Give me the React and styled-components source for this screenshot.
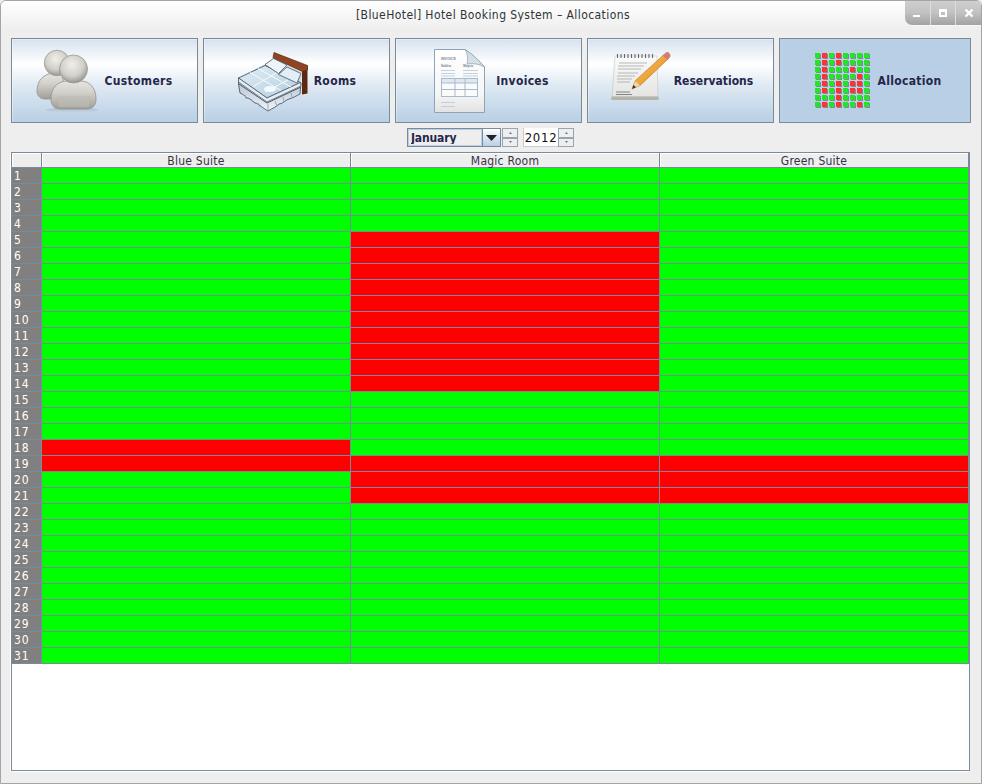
import React from "react";
import styled, { createGlobalStyle } from "styled-components";

const Global = createGlobalStyle`
  html, body { margin: 0; padding: 0; background: #eeeeee; }
  #root { width: 982px; height: 784px; }
`;

const LINE = "#7a8a99";
const UI_FONT = `"DejaVu Sans Condensed", "DejaVu Sans", sans-serif`;

const Window = styled.div`
  position: relative;
  box-sizing: border-box;
  width: 982px;
  height: 784px;
  display: flex;
  flex-direction: column;
  overflow: hidden;
  background: #eeeeee;
  border: 1px solid #a4a4a4;
  border-radius: 6px 6px 0 0;
  font-family: ${UI_FONT};
  font-stretch: condensed;
`;

const TitleBar = styled.div`
  flex: none;
  height: 29px;
  display: flex;
  align-items: center;
  justify-content: center;
  padding: 0 0 2px 4px;
  box-sizing: border-box;
  background: linear-gradient(#ffffff, #fafafa 30%, #eeeeee);
  color: #2e3436;
  font-size: 12px;
  letter-spacing: 0.42px;
`;

const WindowControls = styled.div`
  position: absolute;
  top: -1px;
  right: 0;
  width: 76px;
  height: 25px;
  display: flex;
  background: linear-gradient(#d0d0d0, #c2c2c2 50%, #a2a2a2);
  border-bottom-left-radius: 7px;
  box-shadow: 0 1px 0 #f8f8f8;
`;

const ControlCell = styled.div`
  flex: 1;
  display: flex;
  align-items: center;
  justify-content: center;
  border-left: ${(p) => (p.$sep ? "1px solid #dedede" : "none")};
`;

const Toolbar = styled.div`
  flex: none;
  display: flex;
  gap: 5px;
  padding: 8px 10px 0;
`;

const NavButton = styled.div`
  box-sizing: border-box;
  width: ${(p) => (p.$wide ? 192 : 187)}px;
  height: 85px;
  display: flex;
  align-items: center;
  justify-content: center;
  gap: ${(p) => p.$gap}px;
  border: 1px solid ${LINE};
  background: ${(p) =>
    p.$active
      ? "#b8cfe5"
      : "linear-gradient(#d6e2ef, #ffffff 30%, #dde8f2 58%, #b8cfe5)"};
  box-shadow: ${(p) => (p.$active ? "none" : "inset 1px 1px 0 rgba(255,255,255,.35)")};
`;

const NavLabel = styled.span`
  font-size: 12px;
  font-weight: 700;
  letter-spacing: ${(p) => p.$track}px;
  color: #26264a;
  white-space: nowrap;
`;

const DateRow = styled.div`
  flex: none;
  height: 29px;
  box-sizing: border-box;
  padding: 5px 0 0 406px;
  display: flex;
  align-items: flex-start;
`;

const MonthCombo = styled.div`
  box-sizing: border-box;
  width: 94px;
  height: 19px;
  display: flex;
  border: 1px solid ${LINE};
`;

const MonthValue = styled.div`
  box-sizing: border-box;
  flex: 1;
  height: 17px;
  padding-left: 2px;
  border: 1px solid #b8cfe5;
  background: #eeeeee;
`;

const MonthText = styled.div`
  height: 14px;
  overflow: hidden;
  color: #26264a;
  font-size: 12px;
  font-weight: 700;
  line-height: 17px;
  letter-spacing: -0.15px;
`;

const ArrowButton = styled.div`
  box-sizing: border-box;
  flex: none;
  width: 18px;
  display: flex;
  align-items: center;
  justify-content: center;
  border-left: 1px solid ${LINE};
  background: linear-gradient(#ffffff, #dde8f2 45%, #b8cfe5);
`;

const Spinner = styled.div`
  box-sizing: border-box;
  flex: none;
  width: 16px;
  height: 19px;
  display: flex;
  flex-direction: column;
  margin-left: ${(p) => p.$ml || 0}px;
  border: 1px solid #98a4b0;
`;

const SpinPart = styled.div`
  flex: 1;
  display: flex;
  align-items: center;
  justify-content: center;
  background: #eeeeee;
  border-top: ${(p) => (p.$lower ? "2px solid #98a4b0" : "none")};
`;

const YearField = styled.div`
  box-sizing: border-box;
  flex: none;
  width: 35px;
  height: 19px;
  margin-left: 5px;
  background: #ffffff;
  border-left: 1px solid #cccccc;
  border-bottom: 1px solid #cccccc;
  color: #111111;
  font-size: 13px;
  letter-spacing: 0.7px;
  line-height: 19px;
  text-align: center;
`;

const TableFrame = styled.div`
  flex: 1;
  margin: 0 11px 12px 10px;
  border: 1px solid ${LINE};
  box-shadow: -1px 1px 0 #ffffff;
  background: #ffffff;
  display: flex;
  flex-direction: column;
`;

const GridRow = styled.div`
  display: grid;
  grid-template-columns: 30px repeat(3, 309px);
  grid-template-rows: ${(p) => (p.$header ? 15 : 16)}px;
  height: ${(p) => (p.$header ? 15 : 16)}px;
  box-sizing: border-box;
  flex: none;
`;

const HeadCell = styled.div`
  box-sizing: border-box;
  background: #eeeeee;
  border-right: 1px solid ${LINE};
  border-bottom: 1px solid ${LINE};
  box-shadow: inset 1px 1px 0 #ffffff;
  color: #333344;
  font-size: 12px;
  letter-spacing: 0.25px;
  line-height: 16px;
  text-align: center;
`;

const DayCell = styled.div`
  box-sizing: border-box;
  padding-left: 2px;
  background: #808080;
  border-right: 1px solid ${LINE};
  border-bottom: 1px solid ${LINE};
  color: #ffffff;
  font-size: 12px;
  letter-spacing: 0.8px;
  line-height: 16px;
`;

const SlotCell = styled.div`
  box-sizing: border-box;
  background: ${(p) => (p.$busy ? "#ff0000" : "#00ff00")};
  border-right: 1px solid ${LINE};
  border-bottom: 1px solid ${LINE};
`;

const rooms = [
  { name: "Blue Suite", busy: [18, 19] },
  { name: "Magic Room", busy: [5, 6, 7, 8, 9, 10, 11, 12, 13, 14, 19, 20, 21] },
  { name: "Green Suite", busy: [19, 20, 21] },
];
const days = Array.from({ length: 31 }, (_, i) => i + 1);

const CustomersIcon = () => (
  <svg width="64" height="64" viewBox="0 0 64 64">
    <defs>
      <radialGradient id="hd" cx="0.45" cy="0.35" r="0.68">
        <stop offset="0" stopColor="#f0efea" />
        <stop offset="0.6" stopColor="#d0cfc8" />
        <stop offset="1" stopColor="#8f8e87" />
      </radialGradient>
      <linearGradient id="bd" x1="0" y1="0" x2="0" y2="1">
        <stop offset="0" stopColor="#e6e5df" />
        <stop offset="0.4" stopColor="#d2d1ca" />
        <stop offset="1" stopColor="#a09f97" />
      </linearGradient>
      <linearGradient id="sh" x1="0" y1="0" x2="0" y2="1">
        <stop offset="0" stopColor="#8a9099" stopOpacity="0.45" />
        <stop offset="1" stopColor="#8a9099" stopOpacity="0" />
      </linearGradient>
    </defs>
    <ellipse cx="36" cy="61" rx="26" ry="2.5" fill="url(#sh)" />
    <path d="M1 42C1 31 8 25 17 24L26 24L30 50L8 50C3 49 1 46 1 42Z" fill="url(#bd)" stroke="#93928b" strokeWidth=".8" />
    <circle cx="21" cy="14" r="12.7" fill="url(#hd)" stroke="#9a9992" strokeWidth=".8" />
    <path d="M15 50C15 38 22 33 30 32L46 32C54 33 60 39 60 50C60 57 56 60 50 60L25 60C18 60 15 56 15 50Z" fill="url(#bd)" stroke="#93928b" strokeWidth=".8" />
    <path d="M21 47L54 47L53 58L23 58Z" fill="#bdbcb5" opacity=".6" />
    <circle cx="37.5" cy="20" r="14" fill="url(#hd)" stroke="#9a9992" strokeWidth=".8" />
  </svg>
);

const RoomsIcon = () => (
  <svg width="72" height="64" viewBox="0 0 72 64">
    <defs>
      <linearGradient id="quilt" x1="0" y1="0" x2="1" y2="1">
        <stop offset="0" stopColor="#e0edf5" />
        <stop offset="1" stopColor="#b4cddf" />
      </linearGradient>
      <linearGradient id="skirt" x1="0" y1="0" x2="0" y2="1">
        <stop offset="0" stopColor="#aebccd" />
        <stop offset="1" stopColor="#f0f4f9" />
      </linearGradient>
    </defs>
    <path d="M65 17L70.500 16.500L70.500 44.500L65 45.500Z" fill="#5e2810" />
    <path d="M37 3.500L70.500 16.500L70.500 21L65 22.500L36 9Z" fill="#8f4424" stroke="#5e2810" strokeWidth=".7" />
    <path d="M28 15L36 9.500L65 23L64 34L30 49L1.500 29Z" fill="#c9dceb" />
    <path d="M1.500 29L1.500 35L3 44C6 45 8 47 10 49C13 49 15 52 18 54C21 54 24 58 31 62C36 59 39 58 42 55C46 55 48 51 52 50C56 49 59 47 63 45L64 34L30 49Z" fill="url(#skirt)" stroke="#4c5866" strokeWidth=".9" />
    <path d="M2 35L30 54L64 38" fill="none" stroke="#4c5866" strokeWidth="1" />
    <path d="M8 46L9 50M14 50L16 53M21 54L23 58M31 55L31 62M38 52L40 57M46 48L47 53M54 44L55 48" stroke="#8b98a8" strokeWidth=".8" />
    <path d="M1.500 29L28 16.500L63.500 33.500L30 49Z" fill="url(#quilt)" stroke="#4c5866" strokeWidth=".9" />
    <path d="M1.500 29L1.500 33L30 53L64 37L63.500 33.500L30 49Z" fill="#e2edf5" stroke="#4c5866" strokeWidth=".7" />
    <path d="M13 23.500L44 41.500M21 19.500L54 38M17 37L39 24M28 43L51 31" fill="none" stroke="#f6fbff" strokeWidth="1" />
    <ellipse cx="33" cy="40" rx="6" ry="3" fill="#f4f9fd" />
    <path d="M28 15.500L36.500 9.500L50 16L41.500 24.500Z" fill="#eef5fa" stroke="#4c5866" strokeWidth=".8" />
    <path d="M41.500 25.500L50 18L64 24.500L60 34Z" fill="#e4eef6" stroke="#4c5866" strokeWidth=".8" />
  </svg>
);

const InvoiceIcon = () => (
  <svg width="64" height="64" viewBox="0 0 64 64">
    <defs>
      <linearGradient id="paper" x1="0" y1="0" x2="0" y2="1">
        <stop offset="0" stopColor="#ffffff" />
        <stop offset="0.7" stopColor="#f6f6f6" />
        <stop offset="1" stopColor="#e2e2e2" />
      </linearGradient>
    </defs>
    <path d="M6.500 .5L37 .5C44 5 51 11 56.500 18L56.500 63.500L6.500 63.500Z" fill="url(#paper)" stroke="#8fa3b6" />
    <path d="M37 .5C40 5 40 11 39 15C45 14 51 15 56.500 18C51 11 44 5 37 .5Z" fill="#d5dde5" stroke="#8fa3b6" strokeWidth=".7" />
    <text x="13" y="11" fontSize="3.6" fontWeight="700" fill="#778899" fontFamily="Liberation Sans, sans-serif">INVOICE</text>
    <text x="13" y="18" fontSize="3" fontWeight="700" fill="#667788" fontFamily="Liberation Sans, sans-serif">Sold to</text>
    <text x="35" y="18" fontSize="3" fontWeight="700" fill="#667788" fontFamily="Liberation Sans, sans-serif">Ship to</text>
    <path d="M13 21.500H27M13 24.500H27M13 27H27M35 21.500H50M35 24.500H50M35 27H50M13 53.500H27M13 57.500H27" stroke="#bccddc" strokeWidth=".9" />
    <rect x="13.500" y="29.500" width="36" height="18" fill="#fbfbfb" stroke="#a8bbcd" />
    <rect x="13.500" y="29.500" width="36" height="4.500" fill="#dfe8f1" stroke="#a8bbcd" />
    <path d="M27 29.500V47.500M37 29.500V47.500M13.500 40.500H49.500" stroke="#a8bbcd" fill="none" />
  </svg>
);

const ReservationsIcon = () => (
  <svg width="64" height="64" viewBox="0 0 64 64">
    <defs>
      <linearGradient id="pad" x1="0" y1="0" x2="0" y2="1">
        <stop offset="0" stopColor="#fbfbfb" />
        <stop offset="1" stopColor="#e4e4e2" />
      </linearGradient>
      <linearGradient id="pencil" x1="0" y1="0" x2="1" y2="1">
        <stop offset="0" stopColor="#ffc867" />
        <stop offset="1" stopColor="#dd8514" />
      </linearGradient>
    </defs>
    <path d="M7 7L49 7L50 48L4 48Z" fill="url(#pad)" stroke="#c4c4c4" strokeWidth=".6" />
    <path d="M4 47.500L50 47.500L51 49.500C51 50.500 50 51 48 51L6 51C4 51 3 50.500 3 49.500Z" fill="#b4b4ad" />
    <path d="M9.500 5V9M13 5V9M16.500 5V9M20 5V9M23.500 5V9M27 5V9M30.500 5V9M34 5V9M37.500 5V9M41 5V9M44.500 5V9" stroke="#66666a" strokeWidth="1.100" />
    <path d="M11 14H39M10 17H36M10 20H33M10 24H30M9 27H27M9 30H24M9 33H22" stroke="#b0b0b0" strokeWidth=".9" />
    <path d="M8 43H22M8 45.500H24" stroke="#77777a" strokeWidth=".9" />
    <path d="M24 40L27 32L55.500 6L59.500 10.500L32 36.500Z" fill="url(#pencil)" stroke="#b46f10" strokeWidth=".6" />
    <path d="M24 40L27 32L32 36.500Z" fill="#ecd6ac" />
    <path d="M24 40L25.500 36L28 38.300Z" fill="#333" />
    <path d="M55 6.500L57.500 4C58.500 3 60 3 61 4L61.500 5C62.500 6 62.500 7.500 61.500 8.500L59.500 11Z" fill="#d97a72" stroke="#a86" strokeWidth=".4" />
  </svg>
);

const allocMap = [
  "GRGRGGGG",
  "GRGRGGGG",
  "GRGGGRGG",
  "GRGGGGRG",
  "GRGRGRRG",
  "GRGRGRRG",
  "GGGRGGGG",
  "GRGRGGRG",
];

const AllocationIcon = () => (
  <svg width="64" height="64" viewBox="0 0 64 64" shapeRendering="crispEdges">
    {allocMap.map((row, y) =>
      row.split("").map((c, x) => (
        <g key={`${x}-${y}`}>
          <rect x={7 + x * 7} y={5 + y * 7} width="5" height="5" fill="#8089a0" />
          <rect x={6 + x * 7} y={4 + y * 7} width="5" height="5" fill={c === "R" ? "#ff3333" : "#22e622"} />
        </g>
      ))
    )}
  </svg>
);

const nav = [
  { label: "Customers", Icon: CustomersIcon, gap: 4, track: 0.35 },
  { label: "Rooms", Icon: RoomsIcon, gap: 5, track: 0.35 },
  { label: "Invoices", Icon: InvoiceIcon, gap: 4, track: 0.3 },
  { label: "Reservations", Icon: ReservationsIcon, gap: 2, track: 0 },
  { label: "Allocation", Icon: AllocationIcon, gap: 5, track: 0.3, active: true, wide: true },
];

const Tiny = ({ up }) => (
  <svg width="3" height="2" viewBox="0 0 3 2">
    <path d={up ? "M1.500 0L3 2H0Z" : "M0 0H3L1.500 2Z"} fill="#667788" />
  </svg>
);

export default function App() {
  return (
    <>
      <Global />
      <Window>
        <TitleBar>[BlueHotel] Hotel Booking System – Allocations</TitleBar>
        <WindowControls>
          <ControlCell>
            <svg width="10" height="10" viewBox="0 0 10 10"><rect x="1" y="7" width="7" height="2" fill="#fff" /></svg>
          </ControlCell>
          <ControlCell $sep>
            <svg width="10" height="10" viewBox="0 0 10 10"><path d="M1 1H9V9H1ZM3 4V7H7V4Z" fill="#fff" fillRule="evenodd" /></svg>
          </ControlCell>
          <ControlCell $sep>
            <svg width="10" height="10" viewBox="0 0 10 10"><path d="M1.500 1.500L8.500 8.500M8.500 1.500L1.500 8.500" stroke="#fff" strokeWidth="2.400" /></svg>
          </ControlCell>
        </WindowControls>

        <Toolbar>
          {nav.map(({ label, Icon, gap, track, active, wide }) => (
            <NavButton key={label} $gap={gap} $active={active} $wide={wide}>
              <Icon />
              <NavLabel $track={track}>{label}</NavLabel>
            </NavButton>
          ))}
        </Toolbar>

        <DateRow>
          <MonthCombo>
            <MonthValue>
              <MonthText>January</MonthText>
            </MonthValue>
            <ArrowButton>
              <svg width="11" height="6" viewBox="0 0 11 6"><path d="M0 0H11L5.500 6Z" fill="#222" /></svg>
            </ArrowButton>
          </MonthCombo>
          <Spinner $ml={1}>
            <SpinPart><Tiny up /></SpinPart>
            <SpinPart $lower><Tiny /></SpinPart>
          </Spinner>
          <YearField>2012</YearField>
          <Spinner>
            <SpinPart><Tiny up /></SpinPart>
            <SpinPart $lower><Tiny /></SpinPart>
          </Spinner>
        </DateRow>

        <TableFrame>
          <GridRow $header>
            <HeadCell />
            {rooms.map((r) => (
              <HeadCell key={r.name}>{r.name}</HeadCell>
            ))}
          </GridRow>
          {days.map((d) => (
            <GridRow key={d}>
              <DayCell>{d}</DayCell>
              {rooms.map((r) => (
                <SlotCell key={r.name} $busy={r.busy.includes(d)} />
              ))}
            </GridRow>
          ))}
        </TableFrame>
      </Window>
    </>
  );
}
